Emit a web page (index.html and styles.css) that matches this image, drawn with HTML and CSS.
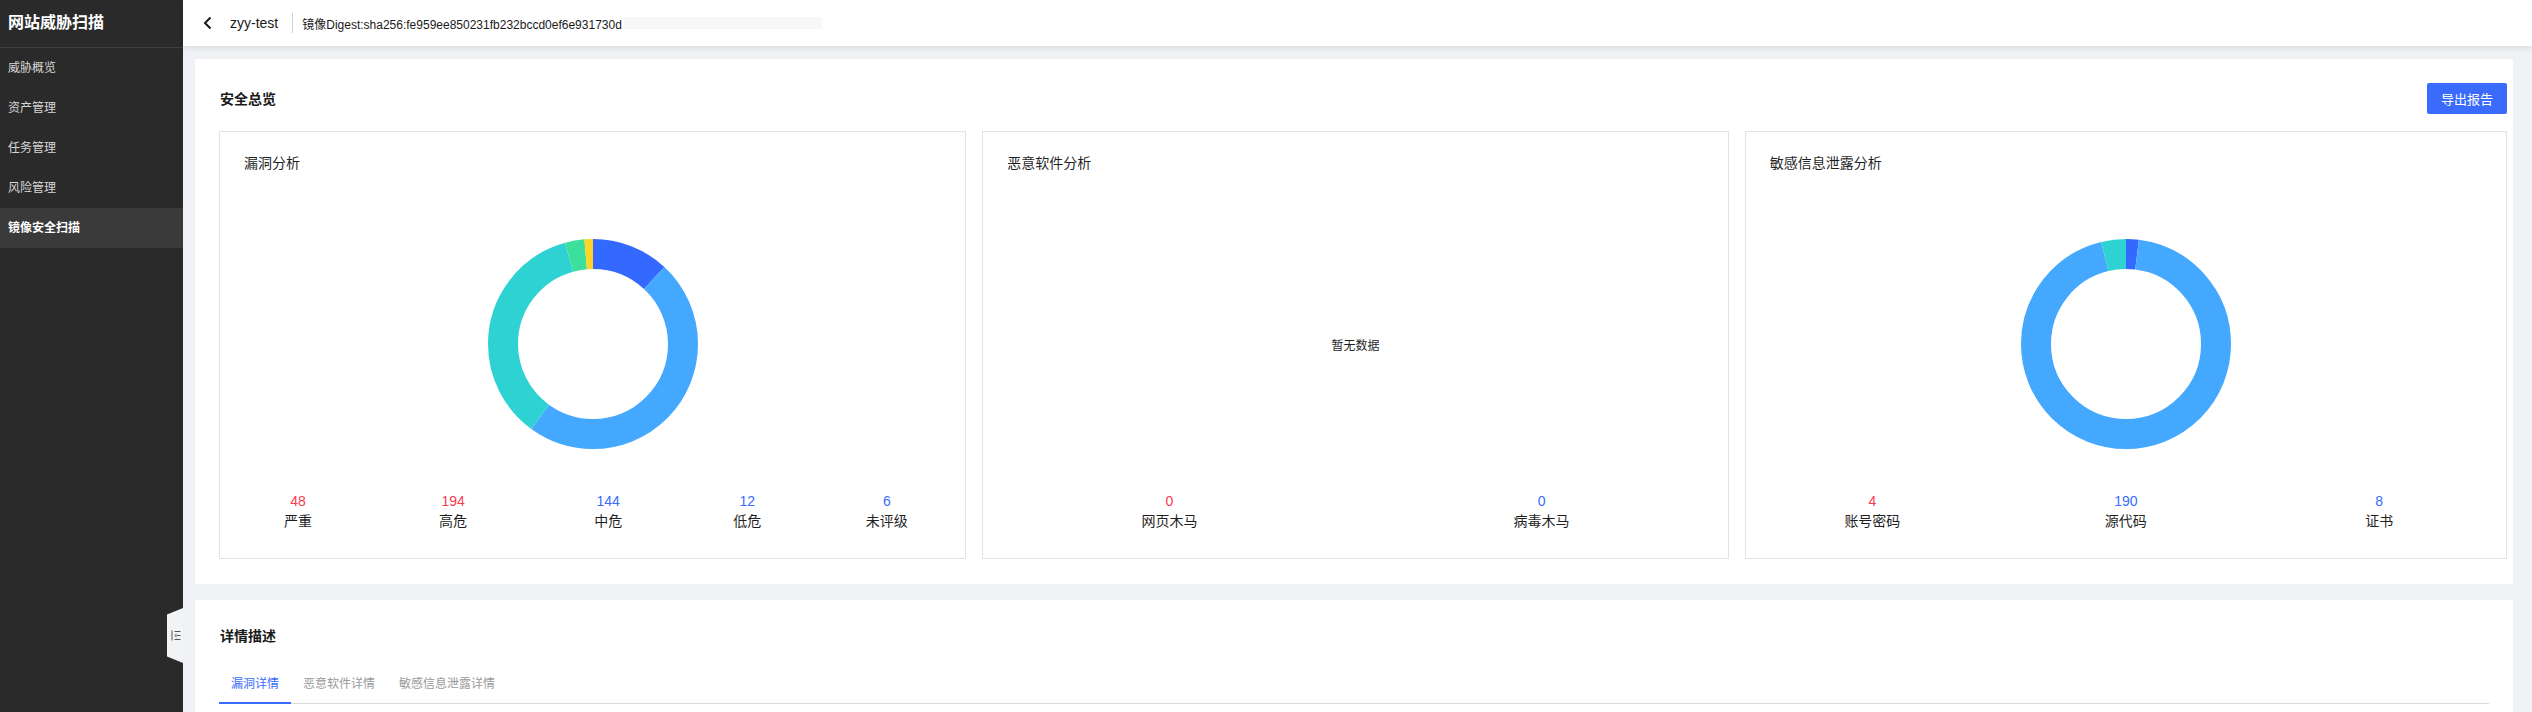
FILE: index.html
```html
<!DOCTYPE html>
<html lang="zh-CN">
<head>
<meta charset="utf-8">
<title>镜像安全扫描</title>
<link rel="stylesheet" href="styles.css">
</head>
<body>
<div class="app">
  <aside class="sidebar">
    <div class="brand">网站威胁扫描</div>
    <nav class="menu">
      <div class="menu-item">威胁概览</div>
      <div class="menu-item">资产管理</div>
      <div class="menu-item">任务管理</div>
      <div class="menu-item">风险管理</div>
      <div class="menu-item active">镜像安全扫描</div>
    </nav>
    <div class="collapse-handle">
      <svg width="10" height="11" viewBox="0 0 10 11"><path d="M1 0.5V10.5M3.5 1.5H9.5M5.5 5.5H9.5M3.5 9.5H9.5M5.5 3.8L3.8 5.5L5.5 7.2" stroke="#555" stroke-width="1" fill="none"/></svg>
    </div>
  </aside>
  <main class="main">
    <header class="topbar">
      <svg class="back" width="9" height="14" viewBox="0 0 9 14"><path d="M7.5 1.5L2 7L7.5 12.5" stroke="#1a1a1a" stroke-width="2" fill="none"/></svg>
      <span class="name">zyy-test</span>
      <span class="divider"></span>
      <span class="digest">镜像Digest:sha256:fe959ee850231fb232bccd0ef6e931730d</span>
      <span class="redact"></span>
    </header>
    <div class="content">
      <section class="card overview">
        <div class="card-head">
          <h2 class="card-title">安全总览</h2>
          <button class="btn-primary">导出报告</button>
        </div>
        <div class="panels">
          <div class="panel">
            <div class="panel-title">漏洞分析</div>
            <div class="chart">
              <svg class="donut" width="210" height="210" viewBox="0 0 210 210">
                <g transform="rotate(-90 105 105)" fill="none" stroke-width="30">
                  <circle cx="105" cy="105" r="90" stroke="#3469ff" stroke-dasharray="67.19 565.49" stroke-dashoffset="0"/>
                  <circle cx="105" cy="105" r="90" stroke="#45a8ff" stroke-dasharray="271.54 565.49" stroke-dashoffset="-67.19"/>
                  <circle cx="105" cy="105" r="90" stroke="#2fd2d3" stroke-dasharray="201.56 565.49" stroke-dashoffset="-338.73"/>
                  <circle cx="105" cy="105" r="90" stroke="#3ddf9c" stroke-dasharray="16.80 565.49" stroke-dashoffset="-540.29"/>
                  <circle cx="105" cy="105" r="90" stroke="#ffd426" stroke-dasharray="8.40 565.49" stroke-dashoffset="-557.09"/>
                </g>
              </svg>
            </div>
            <div class="legend legend-five">
              <div class="legend-item"><span class="num red">48</span><span class="label">严重</span></div>
              <div class="legend-item"><span class="num red">194</span><span class="label">高危</span></div>
              <div class="legend-item"><span class="num blue">144</span><span class="label">中危</span></div>
              <div class="legend-item"><span class="num blue">12</span><span class="label">低危</span></div>
              <div class="legend-item"><span class="num blue">6</span><span class="label">未评级</span></div>
            </div>
          </div>
          <div class="panel">
            <div class="panel-title">恶意软件分析</div>
            <div class="chart">
              <span class="empty">暂无数据</span>
            </div>
            <div class="legend">
              <div class="legend-item"><span class="num red">0</span><span class="label">网页木马</span></div>
              <div class="legend-item"><span class="num blue">0</span><span class="label">病毒木马</span></div>
            </div>
          </div>
          <div class="panel">
            <div class="panel-title">敏感信息泄露分析</div>
            <div class="chart">
              <svg class="donut" width="210" height="210" viewBox="0 0 210 210">
                <g transform="rotate(-90 105 105)" fill="none" stroke-width="30">
                  <circle cx="105" cy="105" r="90" stroke="#3469ff" stroke-dasharray="11.20 565.49" stroke-dashoffset="0"/>
                  <circle cx="105" cy="105" r="90" stroke="#45a8ff" stroke-dasharray="531.89 565.49" stroke-dashoffset="-11.20"/>
                  <circle cx="105" cy="105" r="90" stroke="#2fd2d3" stroke-dasharray="22.40 565.49" stroke-dashoffset="-543.09"/>
                </g>
              </svg>
            </div>
            <div class="legend">
              <div class="legend-item"><span class="num red">4</span><span class="label">账号密码</span></div>
              <div class="legend-item"><span class="num blue">190</span><span class="label">源代码</span></div>
              <div class="legend-item"><span class="num blue">8</span><span class="label">证书</span></div>
            </div>
          </div>
        </div>
      </section>
      <section class="card detail">
        <h2 class="card-title detail-title">详情描述</h2>
        <div class="tabs">
          <div class="tab active">漏洞详情</div>
          <div class="tab">恶意软件详情</div>
          <div class="tab">敏感信息泄露详情</div>
        </div>
      </section>
    </div>
  </main>
</div>
</body>
</html>
```
FILE: styles.css
```css
* { box-sizing: border-box; }
html, body {
  margin: 0;
  padding: 0;
  height: 100%;
  overflow: hidden;
}
body {
  font-family: "Liberation Sans", "Noto Sans CJK SC", sans-serif;
  color: #1f1f1f;
  background: #f0f1f5;
}
.app {
  display: flex;
  height: 712px;
}
.sidebar {
  position: relative;
  width: 183px;
  flex: none;
  background: #2a2a2a;
  color: #d9d9d9;
}
.brand {
  height: 48px;
  line-height: 46px;
  padding-left: 8px;
  font-size: 16px;
  font-weight: 700;
  color: #fff;
  border-bottom: 1px solid #3f3f3f;
}
.menu { display: flex; flex-direction: column; }
.menu-item {
  height: 40px;
  line-height: 40px;
  padding-left: 8px;
  font-size: 12px;
  color: #d6d6d6;
}
.menu-item.active {
  background: #3a3a3a;
  color: #fff;
  font-weight: 700;
}
.collapse-handle {
  position: absolute;
  right: 0;
  top: 608px;
  width: 16px;
  height: 55px;
  background: #f2f3f5;
  clip-path: polygon(100% 0, 100% 100%, 0 88%, 0 12%);
  display: flex;
  align-items: center;
  justify-content: center;
  padding-left: 2px;
}
.main {
  flex: 1;
  display: flex;
  flex-direction: column;
  min-width: 0;
}
.topbar {
  height: 46px;
  flex: none;
  background: #fff;
  display: flex;
  align-items: center;
  padding-left: 20px;
  box-shadow: 0 2px 6px rgba(0, 0, 0, 0.09);
  position: relative;
  z-index: 1;
}
.back { margin-right: 18px; }
.name {
  font-size: 14px;
  color: #1a1a1a;
}
.divider {
  width: 1px;
  height: 20px;
  background: #d0d0d0;
  margin: 0 9px 0 14px;
}
.digest {
  font-size: 12px;
  color: #1a1a1a;
}
.redact {
  width: 198px;
  height: 12px;
  margin-left: 2px;
  background: #f8f8f8;
}
.content {
  flex: 1;
  padding: 13px 19px 0 12px;
  display: flex;
  flex-direction: column;
  gap: 16px;
}
.card {
  background: #fff;
}
.overview {
  padding: 24px 6px 25px 24px;
}
.card-head {
  display: flex;
  align-items: center;
  justify-content: space-between;
  height: 31px;
  padding-left: 1px;
}
.card-title {
  margin: 0;
  font-size: 14px;
  font-weight: 700;
  line-height: 20px;
  color: #1a1a1a;
}
.btn-primary {
  width: 80px;
  height: 31px;
  border: 0;
  border-radius: 2px;
  background: #3a6bfd;
  color: #fff;
  font-family: inherit;
  font-size: 13px;
  padding: 0;
}
.panels {
  margin-top: 17px;
  display: grid;
  grid-template-columns: 747fr 746fr 762fr;
  column-gap: 16px;
}
.panel {
  height: 428px;
  border: 1px solid #dfe4ea;
  display: flex;
  flex-direction: column;
}
.panel-title {
  margin: 21px 0 0 24px;
  font-size: 14px;
  line-height: 20px;
  color: #1f1f1f;
}
.chart {
  margin-top: 66px;
  height: 210px;
  display: flex;
  align-items: center;
  justify-content: center;
}
.donut { display: block; }
.empty {
  font-size: 12px;
  color: #1f1f1f;
}
.legend {
  margin-top: 42px;
  display: flex;
  justify-content: space-around;
}
.legend-five {
  display: grid;
  grid-template-columns: 156fr 154fr 156fr 122fr 157fr;
  justify-items: center;
}
.legend-item {
  display: flex;
  flex-direction: column;
  align-items: center;
  width: 60px;
}
.num {
  font-size: 14px;
  line-height: 20px;
}
.num.red { color: #f53c4f; }
.num.blue { color: #3a6bfd; }
.label {
  font-size: 14px;
  line-height: 21px;
  color: #1f1f1f;
}
.detail {
  flex: 1;
  padding: 26px 24px 0 24px;
}
.detail-title { padding-left: 1px; }
.tabs {
  margin-top: 20px;
  display: flex;
  border-bottom: 1px solid #dcdcdc;
}
.tab {
  padding: 8px 12px;
  line-height: 20px;
  font-size: 12px;
  color: #9a9a9a;
  border-bottom: 2px solid transparent;
  margin-bottom: -1px;
}
.tab.active {
  color: #3a6bfd;
  border-bottom-color: #3a6bfd;
}
```
